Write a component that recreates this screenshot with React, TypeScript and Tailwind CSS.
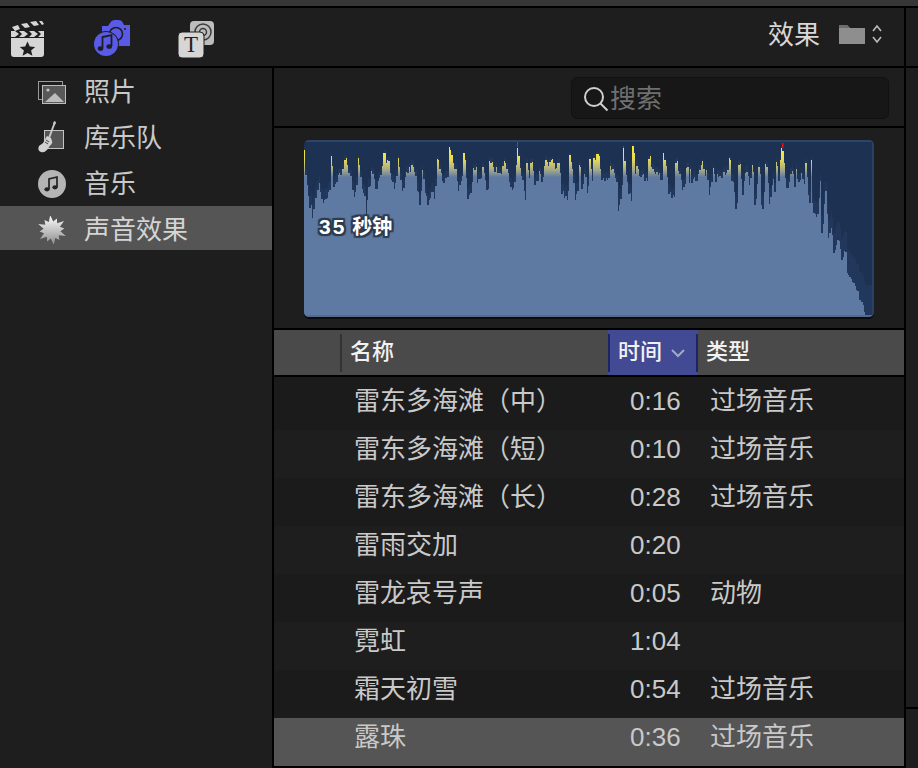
const sidebarItems = [
  { label: "照片", icon: <PhotosIcon /> },
  { label: "库乐队", icon: <GarageBandIcon /> },
  { label: "音乐", icon: <MusicIcon /> },
  { label: "声音效果", icon: <BurstIcon />, selected: true },
];

const tracks = [
  { name: "雷东多海滩（中）", time: "0:16", type: "过场音乐" },
  { name: "雷东多海滩（短）", time: "0:10", type: "过场音乐" },
  { name: "雷东多海滩（长）", time: "0:28", type: "过场音乐" },
  { name: "雷雨交加", time: "0:20", type: "" },
  { name: "雷龙哀号声", time: "0:05", type: "动物" },
  { name: "霓虹", time: "1:04", type: "" },
  { name: "霜天初雪", time: "0:54", type: "过场音乐" },
  { name: "露珠", time: "0:36", type: "过场音乐", selected: true },
];

// waveform tops traced from the picture, [x, y] at 3x per segment
const seg1 = [0,35,3,100,10,130,15,170,20,200,25,235,30,180,38,170,45,125,50,150,55,180,60,185,65,175,72,160,78,140,82,55,87,100,92,135,97,120,103,105,108,100,115,90,122,65,127,55,132,100,140,110,147,150,152,165,157,130,163,60,168,100,175,150,182,175,186,235,190,150,197,135,203,100,208,105,215,150,222,125,230,100,240,35,245,70,252,55,258,100,265,125,272,140,278,105,283,60,288,105,295,155,302,115,308,95,315,85,320,100,325,80,330,90,340,150,347,195,353,90,358,115,365,165,371,190,378,170,385,155,392,170,400,55,405,85,412,95,418,125,425,115,432,105,438,25,442,50,448,75,455,90,463,160,468,120,475,110,480,35,485,100,492,170,497,165,503,130,508,85,515,85,522,125,530,110,537,85,543,125,550,150,557,65,565,75];
const seg2 = [0,90,5,85,12,105,22,95,30,60,35,85,42,95,47,130,55,155,62,115,70,22,76,80,82,105,90,150,95,185,100,70,105,120,112,65,118,95,123,130,130,120,137,100,145,120,150,75,157,65,163,75,170,58,178,70,185,90,192,65,200,110,205,155,212,170,220,180,228,48,235,100,243,175,250,150,258,80,265,140,272,100,280,160,288,60,295,130,302,55,308,45,313,40,318,85,325,115,332,120,340,120,348,80,355,95,362,105,368,130,373,210,381,165,388,25,395,110,405,155,412,180,418,25,424,110,430,80,437,115,445,100,452,120,460,122,467,50,473,90,480,95,488,100,497,105,503,120,508,42,512,60,518,100,525,155,532,170,540,172,547,62,553,100,560,120,565,145];
const seg3 = [0,145,6,90,10,80,13,130,18,90,25,125,30,110,38,125,45,100,50,75,55,58,60,110,67,95,75,160,80,135,87,90,95,120,100,105,110,115,120,100,128,105,137,48,143,120,152,155,158,200,166,72,175,160,182,95,190,105,197,130,205,72,212,195,225,78,232,195,236,200,245,70,252,130,258,185,265,110,272,155,277,60,283,120,288,65,295,25,302,105,310,150,317,110,325,90,332,140,335,78,340,120,348,125,353,100,360,135,364,70,372,165,376,190,383,60,388,130];
const tail = [814,213,817,217,820,180,822,233,825,187,828,238,831,227,834,253,838,237,842,260,845,247,847,273,853,282,857,290,860,300,863,305,865,312,866,317,874,317];

function buildKnots() {
  const pts: [number, number][] = [];
  const add = (arr: number[], ox: number) => {
    for (let i = 0; i < arr.length; i += 2) pts.push([arr[i] / 3 + ox - 304, arr[i + 1] / 3]);
  };
  add(seg1, 304);
  add(seg2, 494);
  add(seg3, 684);
  pts.push([506, 43], [508, 63], [510, 50]);
  for (let i = 0; i < tail.length; i += 2) pts.push([tail[i] - 304, tail[i + 1] - 140]);
  return pts;
}

// each column takes the most extreme knot inside it, so thin spikes survive
function waveTops() {
  const knots = buildKnots();
  const tops: number[] = [];
  const w = 1.34;
  let k = 0;
  for (let i = 0; i * w < 570; i++) {
    const x = i * w;
    while (k < knots.length - 2 && knots[k + 1][0] <= x) k++;
    const [x0, y0] = knots[k];
    const [x1, y1] = knots[k + 1];
    let y = y0 + ((y1 - y0) * Math.min(Math.max(x - x0, 0), x1 - x0)) / (x1 - x0 || 1);
    knots.forEach(([kx, ky]) => {
      if (kx >= x && kx < x + w && Math.abs(ky - 36) > Math.abs(y - 36)) y = ky;
    });
    tops.push(y + (x < 500 ? ((i * 7) % 5) - 2 : 0));
  }
  return tops;
}

function wavePath(scale: number) {
  const w = 1.34;
  let d = "M0 177";
  waveTops().forEach((y, i) => {
    const top = (1 + (y - 1) * scale).toFixed(1);
    d += `L${(i * w).toFixed(2)} ${top}L${((i + 1) * w).toFixed(2)} ${top}`;
  });
  return d + "L570 177Z";
}

function burstPoints() {
  const out: string[] = [];
  for (let i = 0; i < 24; i++) {
    const a = (i * Math.PI) / 12 - Math.PI / 2 - 0.12;
    const r = i % 2 === 0 ? (i % 4 === 0 ? 15 : 12.5) : 8.5;
    out.push(`${(15 + r * Math.cos(a)).toFixed(1)},${(14 + r * Math.sin(a)).toFixed(1)}`);
  }
  return out.join(" ");
}

function Waveform() {
  return (
    <div className="relative w-[570px] h-[177px] rounded-[5px] overflow-hidden bg-[#1d3152] shadow-[0_2px_0_#0c0c0c]">
      <svg width="570" height="177" viewBox="0 0 570 177" className="block">
        <defs>
          <linearGradient id="peak" gradientUnits="userSpaceOnUse" x1="0" y1="0" x2="0" y2="177">
            <stop offset="0.06" stopColor="#fbe92f" />
            <stop offset="0.11" stopColor="#e6da58" />
            <stop offset="0.17" stopColor="#a3a88a" />
            <stop offset="0.21" stopColor="#5f7aa2" />
            <stop offset="1" stopColor="#5f7aa2" />
          </linearGradient>
        </defs>
        <path d={wavePath(0.82)} fill="#21385c" shapeRendering="crispEdges" />
        <path d={wavePath(1)} fill="url(#peak)" shapeRendering="crispEdges" />
        <rect x="213" y="1" width="1" height="6" fill="#e0201c" />
        <rect x="319" y="6" width="1" height="2" fill="#e0201c" />
        <rect x="478" y="3" width="1.5" height="5" fill="#ee1010" />
        <rect x="0" y="0" width="570" height="2" fill="#2f4568" />
        <rect x="0" y="175" width="570" height="2" fill="#54698c" />
        <rect x="568" y="0" width="2" height="177" fill="#2a4066" />
      </svg>
      <div className="absolute left-[15px] top-[75px] flex items-center gap-[6px] text-[20px] leading-[24px] font-semibold text-white [text-shadow:1px_0_0_#2d3a4e,-1px_0_0_#2d3a4e,0_1px_0_#2d3a4e,0_-1px_0_#2d3a4e,2px_0_0_#2d3a4e,-2px_0_0_#2d3a4e,0_2px_0_#2d3a4e,0_-2px_0_#2d3a4e,2px_2px_1px_#2d3a4e,-2px_2px_1px_#2d3a4e,2px_-2px_1px_#2d3a4e,-2px_-2px_1px_#2d3a4e]">
        <span className="tracking-[2px] text-[21px]">35</span>
        <span>秒钟</span>
      </div>
    </div>
  );
}

function ClapperIcon() {
  return (
    <svg width="34" height="36" viewBox="0 0 34 36">
      <path d="M0 17h33v16a3 3 0 0 1-3 3H3a3 3 0 0 1-3-3z" fill="#d6d6d6" />
      <path d="M0 10h4l4 3-4 3H0zM8 10h5l4 3-4 3H8l3-3zM18 10h5l4 3-4 3h-5l3-3zM27 10h6v6h-6l3-3z" fill="#d6d6d6" />
      <path d="M1 6l6-2 2 4-5 2zM10 3l6-1 3 4-5 1zM19 1l6-1 3 4-5 1zM28 0l3 0 2 3-2 1z" fill="#d6d6d6" />
      <path d="M16.5 20.5l2.3 5 5.4.5-4.1 3.5 1.3 5.2-4.9-2.8-4.9 2.8 1.3-5.2-4.1-3.5 5.4-.5z" fill="#1f1f1f" />
    </svg>
  );
}

function CameraMusicIcon() {
  return (
    <svg width="38" height="38" viewBox="0 0 38 38">
      <path d="M8 6h6l2-3c1-2 3-3 5-3h3c3 0 4 1 5 3l1 2h6v21H8z" fill="#5a5ae8" />
      <circle cx="22" cy="14" r="6.5" fill="#5a5ae8" stroke="#1e1e1e" strokeWidth="1.6" />
      <circle cx="31" cy="9" r="1" fill="#1e1e1e" />
      <circle cx="12" cy="24" r="13" fill="#1e1e1e" />
      <circle cx="12" cy="24" r="12" fill="#5a5ae8" />
      <path d="M8.5 28V17l9-2V26" fill="none" stroke="#1e1e1e" strokeWidth="1.8" />
      <ellipse cx="6.5" cy="28.5" rx="2.8" ry="2.3" fill="#1e1e1e" />
      <ellipse cx="15.2" cy="26.5" rx="2.8" ry="2.3" fill="#1e1e1e" />
    </svg>
  );
}

function TextIcon() {
  return (
    <svg width="38" height="38" viewBox="0 0 38 38">
      <rect x="12" y="1" width="24" height="24" rx="4" fill="#bdbdbd" />
      <circle cx="25" cy="12" r="8" fill="none" stroke="#3a3a3a" strokeWidth="1.5" />
      <circle cx="25" cy="12" r="3.5" fill="none" stroke="#3a3a3a" strokeWidth="1.5" />
      <rect x="0" y="12" width="26" height="26" rx="4" fill="#d6d6d6" stroke="#1e1e1e" strokeWidth="1" />
      <text x="13" y="32" textAnchor="middle" fontSize="23" fontFamily="Liberation Serif" fill="#222">
        T
      </text>
    </svg>
  );
}

function PhotosIcon() {
  return (
    <svg width="28" height="23" viewBox="0 0 28 23">
      <rect x="0.5" y="0.5" width="24" height="18" fill="#1e1e1e" stroke="#9a9a9a" />
      <rect x="4.5" y="4.5" width="23" height="18" fill="#585858" stroke="#bdbdbd" />
      <circle cx="10" cy="9" r="1.6" fill="#c4c4c4" />
      <path d="M7 21l10-9 9 9z" fill="#bcbcbc" />
    </svg>
  );
}

function GarageBandIcon() {
  return (
    <svg width="28" height="34" viewBox="0 0 28 34">
      <rect x="6.5" y="9.5" width="19" height="18" fill="#555" stroke="#c4c4c4" />
      <path d="M17 1l-6 16" stroke="#c8c8c8" strokeWidth="2" />
      <path d="M16 0l2 1-1 3-2-1z" fill="#c8c8c8" />
      <path d="M9 15l4 2 1 3c1 3-2 4-3 6-2 4-5 6-8 5-3-1-3-4-2-6 1-1 3-2 4-3 2-2 2-5 4-7z" fill="#d0d0d0" />
      <path d="M7 21l3 2M8 19l3 2" stroke="#444" />
    </svg>
  );
}

function MusicIcon() {
  return (
    <svg width="28" height="28" viewBox="0 0 28 28">
      <circle cx="14" cy="14" r="14" fill="#b4b4b4" />
      <path d="M11 19V9l8-2v10" fill="none" stroke="#222" strokeWidth="1.7" />
      <ellipse cx="9" cy="19.3" rx="2.6" ry="2.1" fill="#222" />
      <ellipse cx="17" cy="17.3" rx="2.6" ry="2.1" fill="#222" />
    </svg>
  );
}

function BurstIcon() {
  return (
    <svg width="30" height="28" viewBox="0 0 30 28">
      <defs>
        <linearGradient id="burst" x1="0.5" y1="0.1" x2="0.5" y2="1">
          <stop offset="0" stopColor="#f2f2f2" />
          <stop offset="1" stopColor="#8c8c8c" />
        </linearGradient>
      </defs>
      <polygon points={burstPoints()} fill="url(#burst)" />
    </svg>
  );
}

function SearchIcon() {
  return (
    <svg width="26" height="26" viewBox="0 0 26 26" fill="none" stroke="#cfcfcf" strokeWidth="2">
      <circle cx="11" cy="11" r="9" />
      <path d="M17.5 17.5l7 7" />
    </svg>
  );
}

function FolderIcon() {
  return (
    <svg width="44" height="22" viewBox="0 0 44 22">
      <path d="M0 3a1 1 0 0 1 1-1h7l3 3h15v16H0z" fill="#8e8e8e" />
      <path d="M0 2h8l3 3H0z" fill="#6c6c6c" />
      <path d="M34 8l4-5 4 5M34 14l4 5 4-5" fill="none" stroke="#b8b8b8" strokeWidth="1.7" />
    </svg>
  );
}

export default function App() {
  return (
    <div className="w-[918px] h-[768px] overflow-hidden flex flex-col bg-black font-['Liberation_Sans','Noto_Sans_CJK_SC',sans-serif] text-[26px] text-[#c9c9c9]">
      <div className="h-[6px] bg-[#363636]" />
      <div className="h-[2px] bg-black" />
      <div className="flex h-[760px]">
        <div className="w-[904px] flex flex-col">
          <div className="h-[58px] bg-[#1e1e1e] flex items-center relative">
            <div className="ml-[11px] mt-[3px]"><ClapperIcon /></div>
            <div className="ml-[49px] mt-[3px]"><CameraMusicIcon /></div>
            <div className="ml-[46px] mt-[3px]"><TextIcon /></div>
            <span className="ml-auto text-[#d8d8d8] mb-[3px]">效果</span>
            <div className="ml-[19px] mr-[21px] mb-[6px]"><FolderIcon /></div>
          </div>
          <div className="h-[2px] bg-black" />
          <div className="flex h-[700px]">
            <div className="w-[272px] bg-[#1e1e1e]">
              {sidebarItems.map((item) => (
                <div
                  key={item.label}
                  className={
                    item.selected
                      ? "h-[44px] pt-[4px] pl-[37px] flex items-center bg-[#555555] text-[#d4d4d4]"
                      : "h-[46px] pt-[2px] pl-[38px] flex items-center"
                  }
                >
                  <div className={item.selected ? "w-[47px] flex" : "w-[46px] flex"}>{item.icon}</div>
                  <span>{item.label}</span>
                </div>
              ))}
            </div>
            <div className="w-[2px] bg-black" />
            <div className="w-[630px] flex flex-col">
              <div className="h-[58px] bg-[#1e1e1e] flex items-center">
                <div className="ml-[297px] w-[318px] h-[42px] rounded-md bg-[#171717] border border-[#111111] flex items-center pl-[11px] pt-[3px] gap-[1px] mt-[1px]">
                  <SearchIcon />
                  <span className="text-[#6f6f6f]">搜索</span>
                </div>
              </div>
              <div className="h-[2px] bg-black" />
              <div className="h-[200px] bg-[#1e1e1e] pt-[12px] pl-[30px]">
                <Waveform />
              </div>
              <div className="h-[2px] bg-black" />
              <div className="h-[45px] flex items-center bg-[#4a4a4a] text-[22px] font-medium text-[#f2f2f2]">
                <div className="w-[66px]" />
                <div className="w-[2px] h-[38px] bg-[#333333]" />
                <div className="w-[266px] pl-[8px] mb-[2px]">名称</div>
                <div className="w-[90px] h-full flex items-center justify-between bg-[#414a92]">
                  <div className="w-[2px] h-[38px] bg-[#1c2468]" />
                  <span className="mb-[2px] ml-[8px]">时间</span>
                  <svg width="16" height="10" viewBox="0 0 16 10" className="ml-[8px]" fill="none" stroke="#a4a8c6" strokeWidth="2">
                    <path d="M2 2l6 6 6-6" />
                  </svg>
                  <div className="w-[2px] h-[38px] ml-[10px] bg-[#1c2468]" />
                </div>
                <div className="pl-[8px] mb-[2px]">类型</div>
              </div>
              <div className="h-[2px] bg-black" />
              <div className="h-[5px] bg-[#1b1b1b]" />
              {tracks.map((track, i) => (
                <div
                  key={track.name}
                  className={
                    "h-[48px] pb-[9px] flex items-center pl-[80px] " +
                    (track.selected ? "bg-[#555555]" : i % 2 === 0 ? "bg-[#1b1b1b]" : "bg-[#1e1e1e]")
                  }
                >
                  <div className="w-[276px]">{track.name}</div>
                  <div className="w-[80px]">{track.time}</div>
                  <div>{track.type}</div>
                </div>
              ))}
            </div>
          </div>
        </div>
        <div className="w-[2px] bg-black" />
        <div className="flex-1 flex flex-col">
          <div className="h-[58px] bg-[#1e1e1e]" />
          <div className="h-[2px] bg-black" />
          <div className="h-[639px] bg-[#1e1e1e]" />
          <div className="h-[2px] bg-black" />
          <div className="flex-1 bg-[#1e1e1e]" />
        </div>
      </div>
    </div>
  );
}
